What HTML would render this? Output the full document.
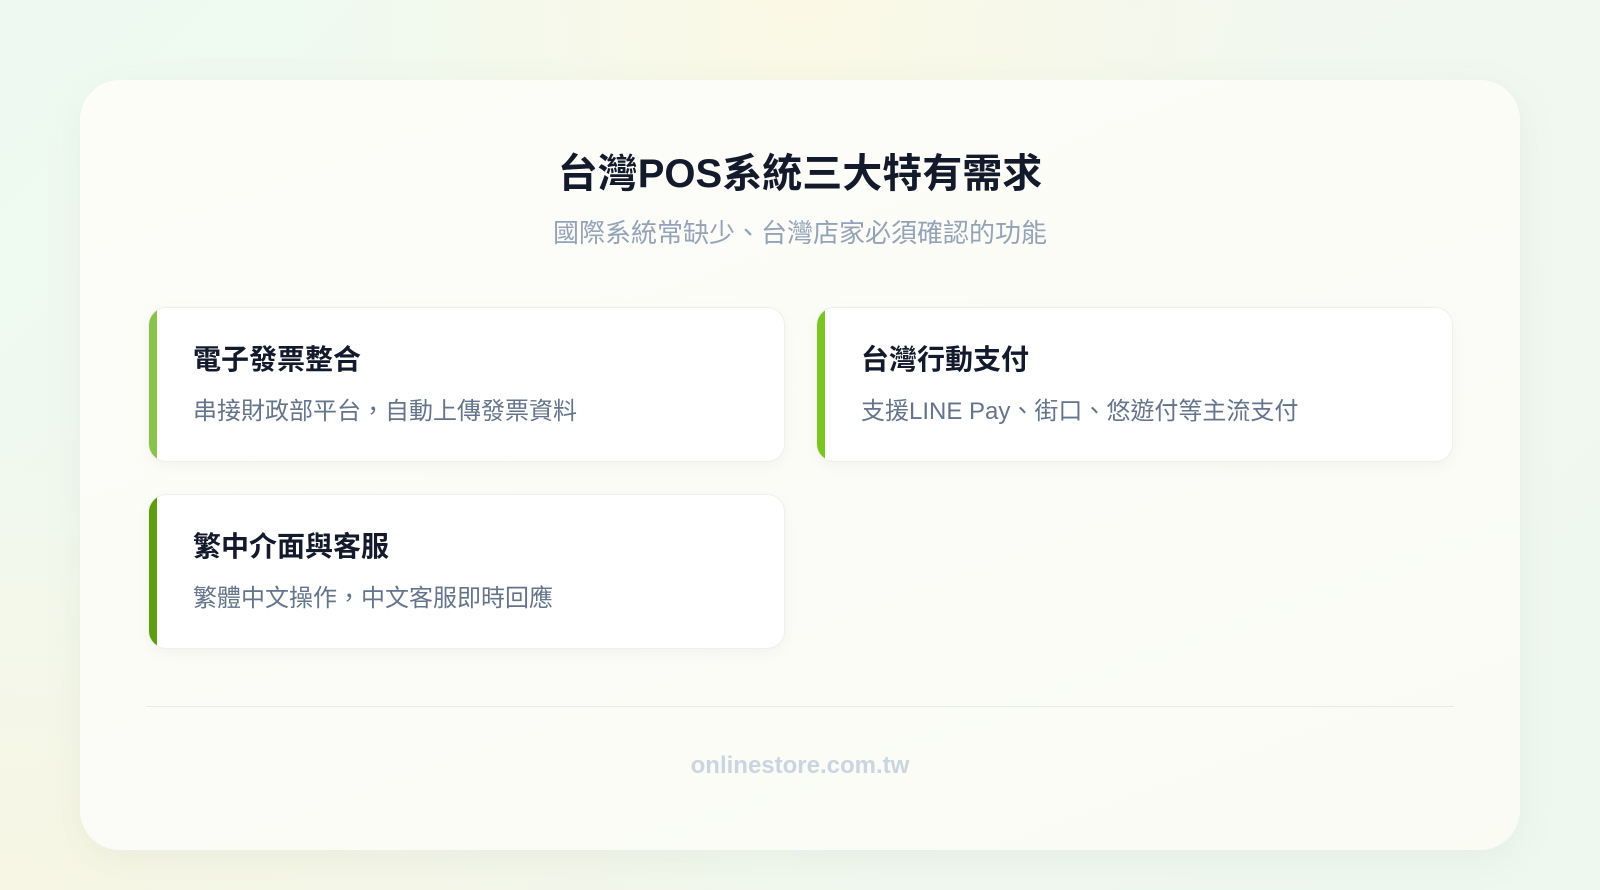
<!DOCTYPE html>
<html><head><meta charset="utf-8"><style>
*{margin:0;padding:0;box-sizing:border-box}
body{width:1600px;height:890px;overflow:hidden;font-family:"Liberation Sans","Noto Sans CJK TC",sans-serif;
background:radial-gradient(ellipse at 50% 0%,#fbf9e6 0%,rgba(251,249,230,0) 45%),radial-gradient(ellipse at 0% 100%,#f7f6e4 0%,rgba(247,246,228,0) 40%),linear-gradient(135deg,#eefaf1,#f2f8ef 50%,#eef8ef);}
.wrap{position:absolute;left:80px;top:80px;width:1440px;height:770px;border-radius:40px;background:linear-gradient(160deg,#fdfdf8,#fbfcf7 60%,#fafbf3);box-shadow:0 10px 40px rgba(100,130,100,.08);}
h1{position:absolute;top:150px;left:0;width:1600px;text-align:center;font-size:40px;line-height:48px;font-weight:700;color:#131a2b;}
.sub{position:absolute;top:217px;left:0;width:1600px;text-align:center;font-size:26px;line-height:32px;color:#94a3b8;}
.c{position:absolute;width:637px;height:155px;background:#fff;border-radius:18px;border:1px solid #eef0ee;box-shadow:0 4px 14px rgba(0,0,0,.04);overflow:hidden}
.c:before{content:"";position:absolute;left:0;top:0;bottom:0;width:8px;background:var(--b)}
.c h3{position:absolute;left:44px;top:35px;font-size:28px;line-height:34px;font-weight:700;color:#131a2b}
.c p{position:absolute;left:44px;top:89px;font-size:24px;line-height:30px;color:#64748b}
.hr{position:absolute;left:146px;top:706px;width:1308px;height:1px;background:#e6e9e6}
.f{position:absolute;top:751px;left:0;width:1600px;text-align:center;font-size:24px;line-height:30px;font-weight:700;color:#cbd5e1}
</style></head><body>
<div class="wrap"></div>
<h1>台灣POS系統三大特有需求</h1>
<div class="sub">國際系統常缺少、台灣店家必須確認的功能</div>
<div class="c" style="left:148px;top:307px;--b:#8bc34a"><h3>電子發票整合</h3><p>串接財政部平台，自動上傳發票資料</p></div>
<div class="c" style="left:816px;top:307px;--b:#7cc520"><h3>台灣行動支付</h3><p>支援LINE Pay、街口、悠遊付等主流支付</p></div>
<div class="c" style="left:148px;top:494px;--b:#5e9c12"><h3>繁中介面與客服</h3><p>繁體中文操作，中文客服即時回應</p></div>
<div class="hr"></div>
<div class="f">onlinestore.com.tw</div>
</body></html>
